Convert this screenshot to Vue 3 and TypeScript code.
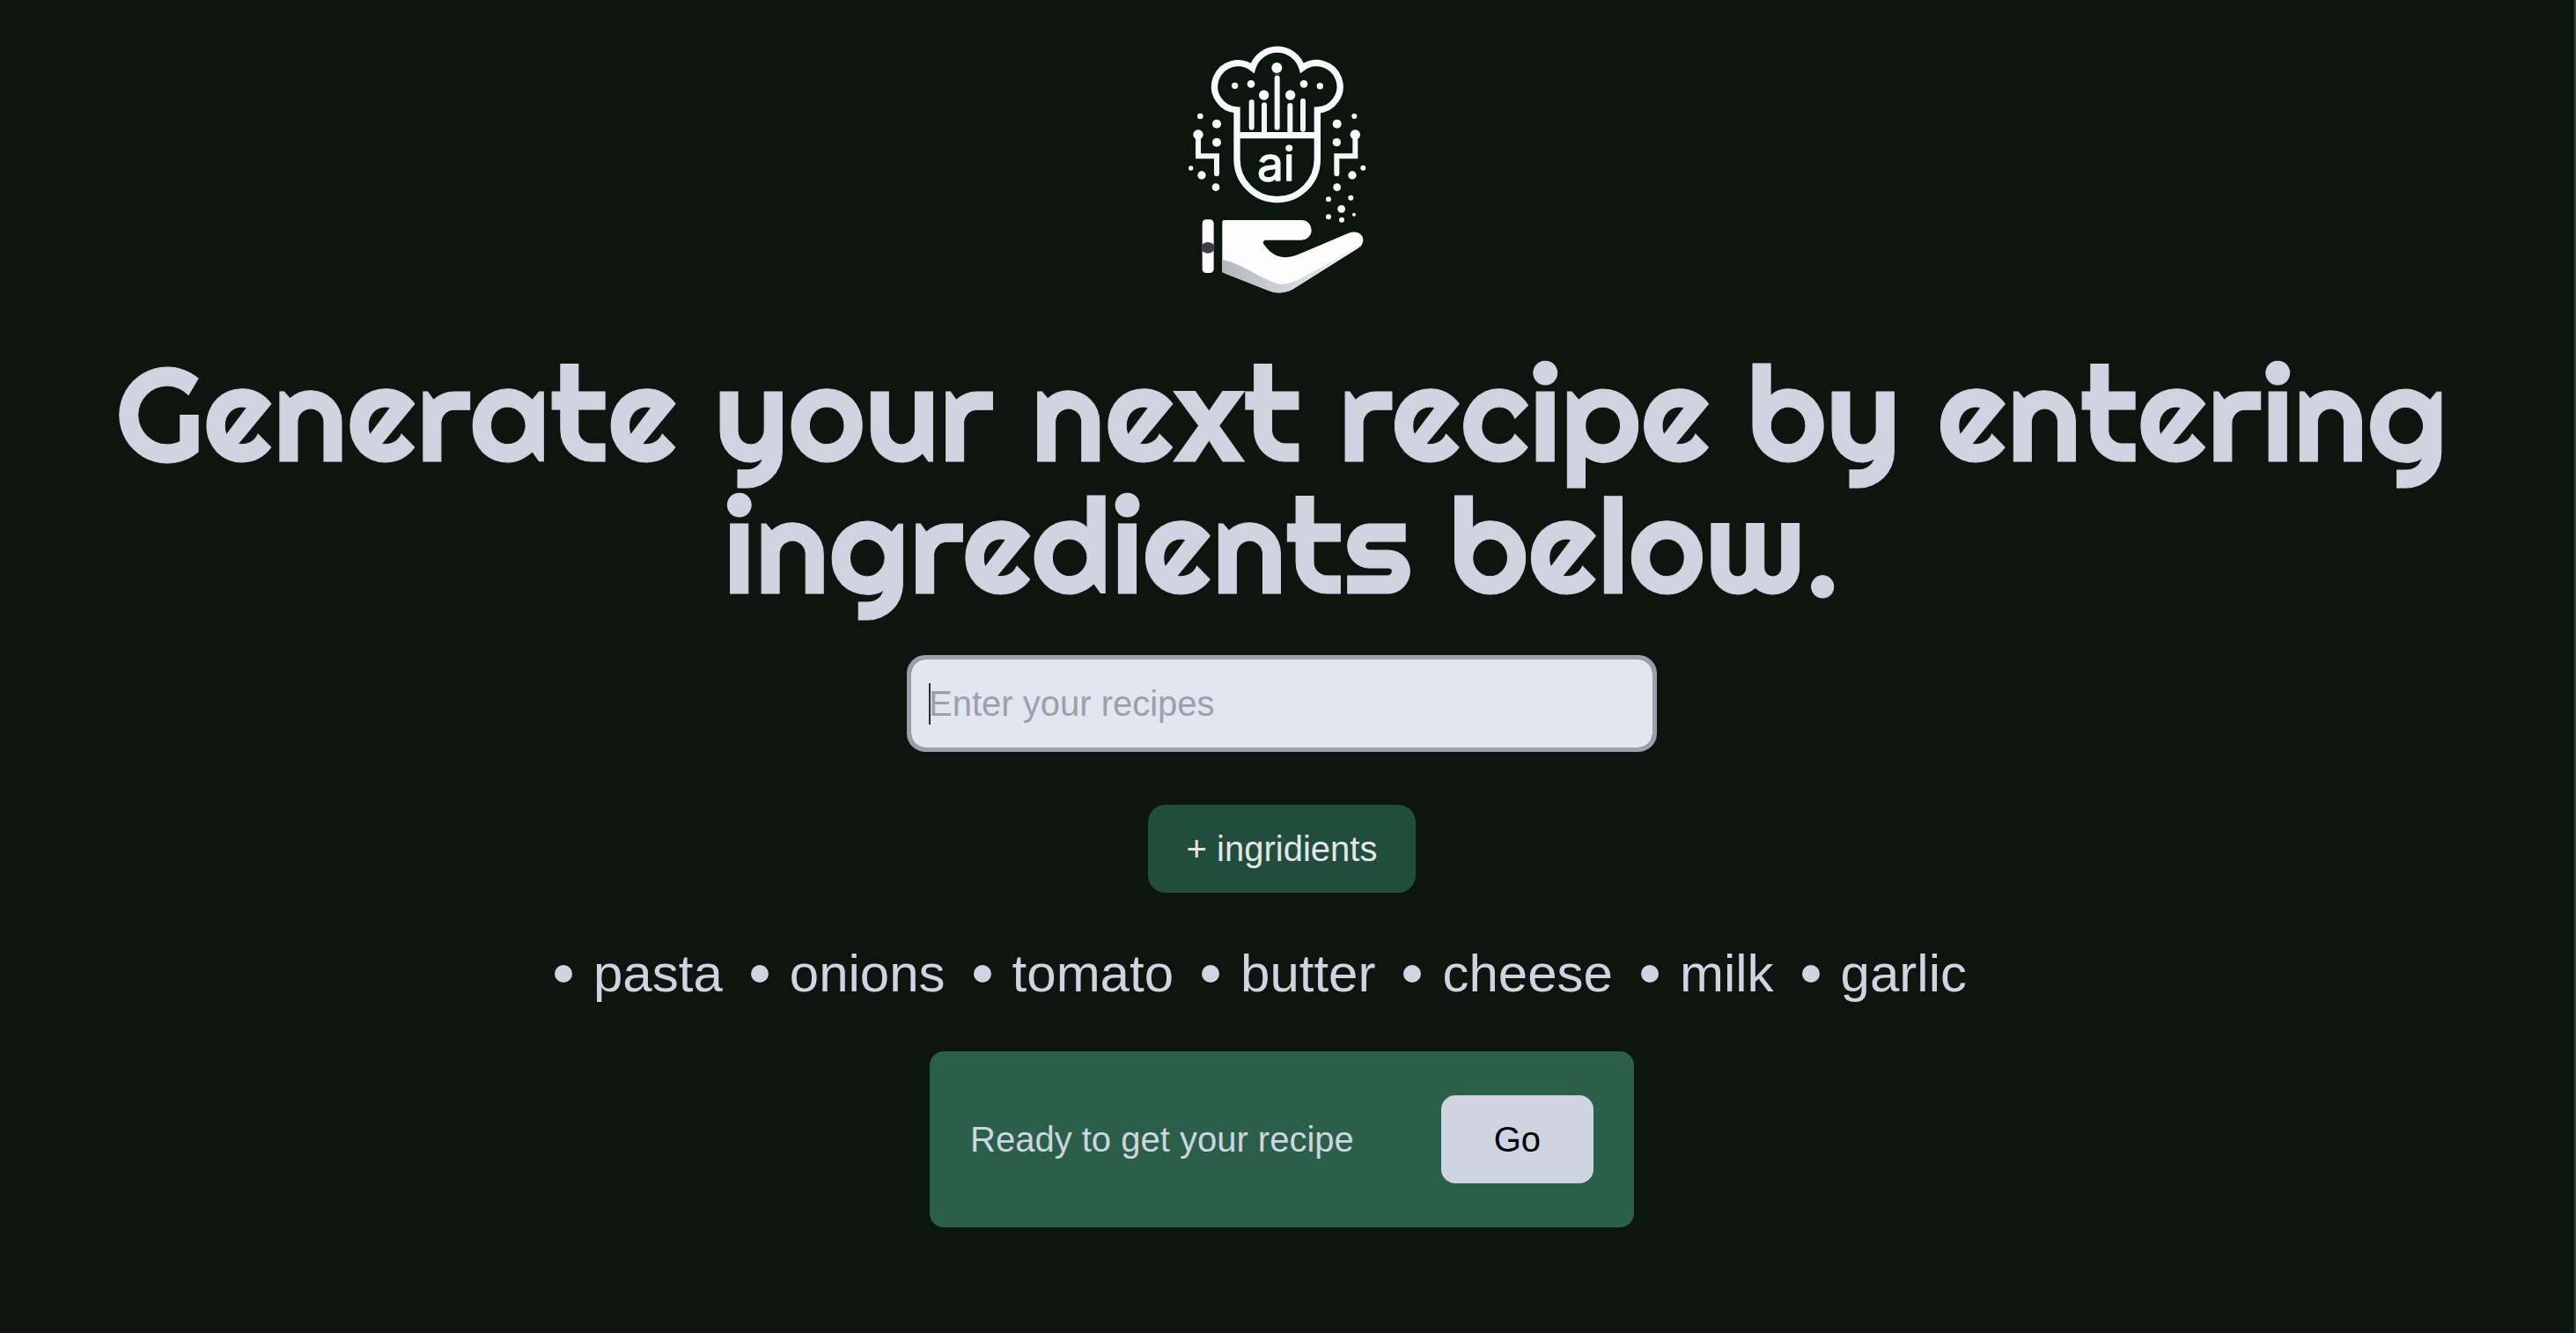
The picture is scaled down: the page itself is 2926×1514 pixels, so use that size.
<script setup lang="ts">
import { ref } from 'vue'

interface Dot {
  x: number
  y: number
  r: number
}

const draft = ref('')
const ingredients = ref<string[]>(['pasta', 'onions', 'tomato', 'butter', 'cheese', 'milk', 'garlic'])

const dots: Dot[] = [
  { x: 361, y: 111, r: 18 },
  { x: 218, y: 172, r: 11 },
  { x: 273, y: 166, r: 13 },
  { x: 317, y: 204, r: 17 },
  { x: 407, y: 204, r: 17 },
  { x: 453, y: 166, r: 13 },
  { x: 508, y: 173, r: 11 },
  { x: 100, y: 276, r: 10 },
  { x: 156, y: 302, r: 15 },
  { x: 93, y: 339, r: 17 },
  { x: 156, y: 365, r: 15 },
  { x: 68, y: 453, r: 8 },
  { x: 105, y: 477, r: 14 },
  { x: 153, y: 518, r: 13 },
  { x: 625, y: 276, r: 9 },
  { x: 566, y: 302, r: 15 },
  { x: 628, y: 339, r: 17 },
  { x: 565, y: 365, r: 14 },
  { x: 655, y: 452, r: 9 },
  { x: 618, y: 477, r: 14 },
  { x: 566, y: 518, r: 13 },
  { x: 537, y: 559, r: 9 },
  { x: 613, y: 554, r: 9 },
  { x: 581, y: 592, r: 13 },
  { x: 537, y: 619, r: 9 },
  { x: 582, y: 629, r: 9 },
  { x: 624, y: 611, r: 6 },
]

function addIngredient(): void {
  const name = draft.value.trim()
  if (name) {
    ingredients.value.push(name)
    draft.value = ''
  }
}
</script>

<template>
  <main class="page">
    <svg class="logo" viewBox="0 0 756 900" role="img" aria-label="AI chef">
      <defs>
        <linearGradient id="shade" x1="0" y1="0" x2="1" y2="0">
          <stop offset="0" stop-color="#b4b8bd" />
          <stop offset="0.45" stop-color="#cfd2d7" />
          <stop offset="1" stop-color="#f4f5f7" />
        </linearGradient>
      </defs>
      <g fill="none" stroke="#f8f9fc" stroke-width="22">
        <path d="M225 423V255A80 80 0 1 1 278 112A88 88 0 0 1 447 112A80 80 0 1 1 499 255V423A137 137 0 0 1 225 423Z" />
        <path d="M225 341H499" />
      </g>
      <g fill="none" stroke="#f4f5f8" stroke-width="18" stroke-linecap="round">
        <path d="M275 228V314M318 238V330M362 146V314M406 240V330M450 224V320" />
        <path d="M93 358V412H156V472M628 358V412H565V472" />
      </g>
      <rect x="353" y="129" width="18" height="9" fill="#3a3f44" />
      <circle v-for="(dot, i) in dots" :key="i" :cx="dot.x" :cy="dot.y" :r="dot.r" fill="#f8f9fc" />
      <text class="logo-text" x="358" y="495" text-anchor="middle">ai</text>
      <rect x="107" y="628" width="39" height="182" rx="13" fill="#fbfbfc" />
      <ellipse cx="126" cy="724" rx="23" ry="19" fill="#3c3e46" />
      <path
        fill="#fcfcfd"
        d="M175 636Q175 630 182 630H445A34 34 0 0 1 445 698H322Q310 701 316 712C338 743 360 757 393 757Q415 755 432 748L606 674C640 662 664 686 652 710Q650 718 638 725L414 866Q370 887 330 869L175 808Z"
      />
      <path
        fill="url(#shade)"
        d="M175 765C240 775 300 830 372 849Q405 847 440 830L575 755Q620 728 652 712Q650 718 638 725L414 866Q370 887 330 869L175 808Z"
      />
    </svg>

    <h1 class="title">Generate your next recipe by entering ingredients below.</h1>

    <form class="entry" @submit.prevent="addIngredient">
      <div class="field">
        <input v-model="draft" class="field-input" type="text" placeholder="Enter your recipes" aria-label="Enter your recipes" />
        <span v-if="!draft" class="caret"></span>
      </div>
      <button class="add" type="submit">+ ingridients</button>
    </form>

    <ul class="list">
      <li v-for="item in ingredients" :key="item" class="item">{{ item }}</li>
    </ul>

    <section class="card">
      <p class="card-text">Ready to get your recipe</p>
      <button class="go" type="button">Go</button>
    </section>
  </main>
</template>

<style>
body {
  margin: 0;
  background: #0c160f;
}
</style>

<style scoped>
.page {
  box-sizing: border-box;
  min-height: 100vh;
  padding: 40px 12px 40px 0;
  border-right: 2px solid #3a4444;
  display: flex;
  flex-direction: column;
  align-items: center;
  background: #0c160f;
  color: #ced4e0;
  font-family: "Liberation Sans", Arial, sans-serif;
  font-size: 40px;
  line-height: 60px;
}
.logo {
  width: 252px;
  height: 300px;
}
.logo-text {
  font-family: Inter, sans-serif;
  font-size: 160px;
  fill: #f8f9fc;
  stroke: #f8f9fc;
  stroke-width: 4px;
  stroke-linejoin: round;
}
.title {
  margin: 55px 0 0;
  font-family: Righteous, Inter, sans-serif;
  font-size: 150px;
  font-weight: 400;
  line-height: 150px;
  text-align: center;
  -webkit-text-stroke: 1px currentColor;
}
.entry {
  margin-top: 54px;
  display: flex;
  flex-direction: column;
  align-items: center;
  gap: 65px;
}
.field {
  position: relative;
  width: 842px;
  max-width: 100%;
}
.field-input {
  display: block;
  box-sizing: border-box;
  width: 100%;
  height: 100px;
  padding: 0 20px;
  border: 0;
  border-radius: 16px;
  outline: 5px solid #9ca0ad;
  background: #e2e6ee;
  color: #0c160f;
  font: inherit;
}
.field-input::placeholder {
  color: #9ca0ad;
  opacity: 1;
}
.caret {
  position: absolute;
  top: 27px;
  left: 20px;
  width: 2px;
  height: 47px;
  background: #14382b;
}
.add,
.go {
  height: 100px;
  padding: 0 44px;
  border: 0;
  border-radius: 20px;
  background: #214d3c;
  color: #e2e6ee;
  font: inherit;
}
.list {
  margin: 56px 0 0;
  padding: 0 48px 0 0;
  display: flex;
  flex-wrap: wrap;
  justify-content: center;
  gap: 32px;
  list-style: none;
  font-size: 60px;
  line-height: 72px;
}
.item {
  display: flex;
  align-items: center;
  gap: 24px;
}
.item::before {
  content: "";
  width: 20px;
  height: 20px;
  border-radius: 50%;
  background: #ced4e0;
}
.card {
  box-sizing: border-box;
  width: 800px;
  max-width: 100%;
  margin-top: 52px;
  padding: 50px 46px;
  display: flex;
  align-items: center;
  justify-content: space-between;
  border-radius: 16px;
  background: #2a5f49;
}
.card-text {
  margin: 0;
}
.go {
  padding: 0 60px;
  border-radius: 16px;
  background: #ced4e0;
  color: #000;
}
</style>
